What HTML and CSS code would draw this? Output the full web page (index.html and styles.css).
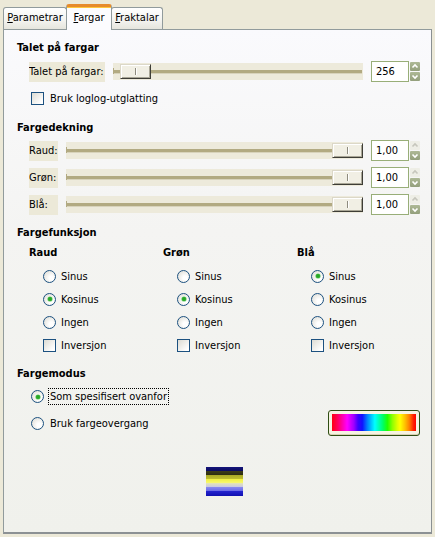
FILE: index.html
```html
<!DOCTYPE html>
<html>
<head>
<meta charset="utf-8">
<link rel="stylesheet" href="styles.css">
</head>
<body>
<div class="win">
  <div class="tabs">
    <div class="tab t1"><u>P</u>arametrar</div>
    <div class="tab t2 active"><u>F</u>argar</div>
    <div class="tab t3"><u>F</u>raktalar</div>
  </div>
  <div class="panel">
    <div class="h h1">Talet på fargar</div>
    <div class="srow r1">
      <span class="lbl lw1">Talet på fargar:</span>
      <div class="track"><div class="thumb th-left"></div></div>
      <div class="spin">
        <span class="entry">256</span>
        <span class="arrows">
          <span class="arr"><svg width="10" height="9" viewBox="0 0 10 9"><path d="M2.5 5.5 L5 3 L7.5 5.5" stroke="#fff" stroke-width="1.6" fill="none"/></svg></span>
          <span class="arr"><svg width="10" height="9" viewBox="0 0 10 9"><path d="M2.5 3.5 L5 6 L7.5 3.5" stroke="#fff" stroke-width="1.6" fill="none"/></svg></span>
        </span>
      </div>
    </div>
    <div class="crow c-log"><span class="chk"></span><span>Bruk loglog-utglatting</span></div>

    <div class="h h2">Fargedekning</div>
    <div class="srow r2">
      <span class="lbl lw2">Raud:</span>
      <div class="track"><div class="thumb th-right"></div></div>
      <div class="spin">
        <span class="entry">1,00</span>
        <span class="arrows">
          <span class="arr dis"><svg width="10" height="9" viewBox="0 0 10 9"><path d="M2.5 5.5 L5 3 L7.5 5.5" stroke="#c6c6bc" stroke-width="1.6" fill="none"/></svg></span>
          <span class="arr"><svg width="10" height="9" viewBox="0 0 10 9"><path d="M2.5 3.5 L5 6 L7.5 3.5" stroke="#fff" stroke-width="1.6" fill="none"/></svg></span>
        </span>
      </div>
    </div>
    <div class="srow r3">
      <span class="lbl lw2">Grøn:</span>
      <div class="track"><div class="thumb th-right"></div></div>
      <div class="spin">
        <span class="entry">1,00</span>
        <span class="arrows">
          <span class="arr dis"><svg width="10" height="9" viewBox="0 0 10 9"><path d="M2.5 5.5 L5 3 L7.5 5.5" stroke="#c6c6bc" stroke-width="1.6" fill="none"/></svg></span>
          <span class="arr"><svg width="10" height="9" viewBox="0 0 10 9"><path d="M2.5 3.5 L5 6 L7.5 3.5" stroke="#fff" stroke-width="1.6" fill="none"/></svg></span>
        </span>
      </div>
    </div>
    <div class="srow r3">
      <span class="lbl lw2">Blå:</span>
      <div class="track"><div class="thumb th-right"></div></div>
      <div class="spin">
        <span class="entry">1,00</span>
        <span class="arrows">
          <span class="arr dis"><svg width="10" height="9" viewBox="0 0 10 9"><path d="M2.5 5.5 L5 3 L7.5 5.5" stroke="#c6c6bc" stroke-width="1.6" fill="none"/></svg></span>
          <span class="arr"><svg width="10" height="9" viewBox="0 0 10 9"><path d="M2.5 3.5 L5 6 L7.5 3.5" stroke="#fff" stroke-width="1.6" fill="none"/></svg></span>
        </span>
      </div>
    </div>

    <div class="h h3">Fargefunksjon</div>
    <div class="cols">
      <div class="col">
        <div class="colh">Raud</div>
        <div class="opt o1"><span class="radio"></span>Sinus</div>
        <div class="opt o2"><span class="radio on"></span>Kosinus</div>
        <div class="opt o2"><span class="radio"></span>Ingen</div>
        <div class="opt o2"><span class="chk"></span>Inversjon</div>
      </div>
      <div class="col">
        <div class="colh">Grøn</div>
        <div class="opt o1"><span class="radio"></span>Sinus</div>
        <div class="opt o2"><span class="radio on"></span>Kosinus</div>
        <div class="opt o2"><span class="radio"></span>Ingen</div>
        <div class="opt o2"><span class="chk"></span>Inversjon</div>
      </div>
      <div class="col">
        <div class="colh">Blå</div>
        <div class="opt o1"><span class="radio on"></span>Sinus</div>
        <div class="opt o2"><span class="radio"></span>Kosinus</div>
        <div class="opt o2"><span class="radio"></span>Ingen</div>
        <div class="opt o2"><span class="chk"></span>Inversjon</div>
      </div>
    </div>

    <div class="h h4">Fargemodus</div>
    <div class="mrow m1"><span class="radio on"></span><span class="focus">Som spesifisert ovanfor</span></div>
    <div class="mrow m2">
      <div class="mleft"><span class="radio"></span><span class="mtext">Bruk fargeovergang</span></div>
      <div class="gbtn"><div class="grad"></div></div>
    </div>

    <div class="preview"></div>
  </div>
</div>
</body>
</html>
```

FILE: styles.css
```css
* { box-sizing: border-box; }
html, body { margin: 0; padding: 0; }
body {
  background: #ECE9D8;
  font-family: "DejaVu Sans Condensed", "DejaVu Sans", sans-serif;
  font-stretch: semi-condensed;
  font-size: 11px;
  color: #000;
  width: 435px;
  height: 537px;
  overflow: hidden;
}
.win { width: 435px; }

/* tabs */
.tabs {
  height: 29px;
  padding-left: 3px;
  display: flex;
  align-items: flex-end;
  position: relative;
  z-index: 2;
}
.tab {
  height: 22px;
  border: 1px solid #919B9C;
  border-bottom: none;
  border-radius: 3px 3px 0 0;
  background: linear-gradient(#FFFFFF, #F3F3EF 60%, #E6E5DD);
  padding-top: 3px;
  line-height: 13px;
  text-align: center;
  white-space: nowrap;
}
.tab u { text-decoration: underline; }
.t1 { width: 64px; }
.t2 { width: 44px; }
.t3 { width: 52px; }
.tab.active {
  height: 26px;
  margin-bottom: -1px;
  border-top: 3px solid #E68B2C;
  box-shadow: inset 0 1px 0 #FFC73C;
  background: #FCFCFE;
  padding-top: 4px;
  margin-left: -1px;
  margin-right: -1px;
  width: 46px;
}

/* panel */
.panel {
  margin: 0 3px;
  width: 429px;
  height: 505px;
  border: 1px solid #919B9C;
  border-right-color: #8A9092;
  border-bottom: 2px solid #8C9194;
  background: linear-gradient(#FAFAFD, #F4F4F2 40%, #F0F1EC);
  padding: 11px 11px 0 13px;
  display: flex;
  flex-direction: column;
  position: relative;
  z-index: 1;
}
.h, .colh {
  font-weight: bold;
  font-size: 11px;
  height: 14px;
  line-height: 14px;
  white-space: nowrap;
}
.h2 { margin-top: 15px; }
.h3 { margin-top: 11px; }
.h4 { margin-top: 14px; }

/* slider rows */
.srow {
  display: flex;
  align-items: center;
  height: 21px;
  margin-left: 12px;
}
.r1 { margin-top: 6px; }
.r2 { margin-top: 5px; }
.r3 { margin-top: 6px; }
.lbl {
  background: #ECE9D8;
  height: 20px;
  line-height: 20px;
  white-space: nowrap;
  flex: none;
  overflow: hidden;
}
.lw1 { width: 76px; }
.lw2 { width: 29px; }
.track {
  flex: 1;
  height: 17px;
  margin: 0 8px;
  background: #EDEADB;
  position: relative;
}
.track::before {
  content: "";
  position: absolute;
  left: 0;
  right: 1px;
  top: 7px;
  height: 3px;
  background: #B2AA82;
  border-bottom: 1px solid #D8D3BC;
}
.track::after {
  content: "";
  position: absolute;
  left: 0;
  top: 5px;
  width: 1px;
  height: 6px;
  background: #B2AA82;
}
.thumb {
  position: absolute;
  top: 1px;
  width: 31px;
  height: 15px;
  background: #F1EFE4;
  border: 1px solid;
  border-color: #DCD8C8 #3E3D36 #3E3D36 #DCD8C8;
  box-shadow: inset 1px 1px 0 #FFFFFF, inset -1px -1px 0 #A9A696;
}
.thumb::after {
  content: "";
  position: absolute;
  left: 14px;
  top: 3px;
  width: 1px;
  height: 7px;
  background: #8E8B7E;
  box-shadow: 1px 0 0 #FFFFFF;
}
.th-left { left: 7px; }
.th-right { right: 0; }

.spin {
  display: flex;
  align-items: center;
  flex: none;
  height: 21px;
}
.entry {
  width: 38px;
  height: 21px;
  border: 1px solid #98AE78;
  background: #FFFFFF;
  line-height: 19px;
  padding-left: 4px;
}
.arrows {
  display: flex;
  flex-direction: column;
  gap: 1px;
  margin-left: 1px;
}
.arr {
  width: 10px;
  height: 9px;
  background: linear-gradient(#AEB996, #939F7C);
  border-radius: 1px;
  display: block;
}
.arr svg { display: block; }
.arr.dis { background: #EEEEE6; }

/* check rows */
.crow {
  display: flex;
  align-items: center;
  height: 16px;
  margin-top: 8px;
  margin-left: 14px;
  gap: 6px;
}
.chk {
  width: 13px;
  height: 13px;
  border: 1px solid #1C5180;
  background: linear-gradient(135deg, #DCDBD3, #FFFFFF 85%);
  flex: none;
  display: inline-block;
}
.radio {
  width: 13px;
  height: 13px;
  border: 1px solid #1C5180;
  border-radius: 50%;
  background: radial-gradient(circle at 65% 65%, #FFFFFF 20%, #DEDDD6 90%);
  flex: none;
  display: inline-block;
  position: relative;
}
.radio.on::after {
  content: "";
  position: absolute;
  left: 3.5px;
  top: 3.5px;
  width: 4px;
  height: 4px;
  border-radius: 50%;
  background: #27A827;
  box-shadow: 0 0 0 0.6px #6CCB6C;
}

/* columns */
.cols {
  display: grid;
  grid-template-columns: 134px 134px 1fr;
  margin-left: 12px;
  margin-top: 6px;
}
.opt {
  display: flex;
  align-items: center;
  gap: 5px;
  height: 16px;
  margin-left: 14px;
  white-space: nowrap;
}
.o1 { margin-top: 8px; }
.o2 { margin-top: 7px; }

/* mode rows */
.mrow {
  display: flex;
  align-items: center;
  margin-left: 14px;
}
.m1 { height: 17px; margin-top: 7px; gap: 4px; }
.focus {
  border: 1px dotted #000;
  padding: 0 1px;
  line-height: 15px;
  height: 17px;
}
.m2 {
  height: 26px;
  margin-top: 5px;
  justify-content: space-between;
}
.mleft { display: flex; align-items: center; gap: 6px; }
.gbtn {
  width: 92px;
  height: 26px;
  border: 1px solid #2F4E14;
  border-radius: 3px;
  background: #F6F3E2;
  padding: 3px;
  box-shadow: inset 0 -1px 0 #D9D2B4;
}
.grad {
  height: 17px;
  background: linear-gradient(90deg,
    #FF0010 0%, #FF0060 7%, #FF00FF 18%, #A000FF 26%, #4000FF 31%,
    #1010FF 36%, #0080FF 42%, #00C8FF 47%, #00FFFF 51%, #00FFB0 56%,
    #00FF60 61%, #20FF00 66%, #90FF00 72%, #E0FF00 78%, #FFFF00 81%,
    #FFC000 87%, #FF8000 92%, #FF2000 97%, #FF0000 100%);
}

.preview {
  margin-top: 31px;
  margin-left: 189px;
  width: 37px;
  height: 29px;
  background: linear-gradient(
    #14147A 0, #0A0A60 4px,
    #3C3C18 4px, #2C2C10 8px,
    #A8A826 8px, #C0C030 12px,
    #F0F040 12px, #F8F870 16px,
    #E6E6B4 16px, #C8C8E6 20px,
    #8A8AF0 20px, #6A6AE8 24px,
    #2424D0 24px, #1010B0 29px);
}
```
